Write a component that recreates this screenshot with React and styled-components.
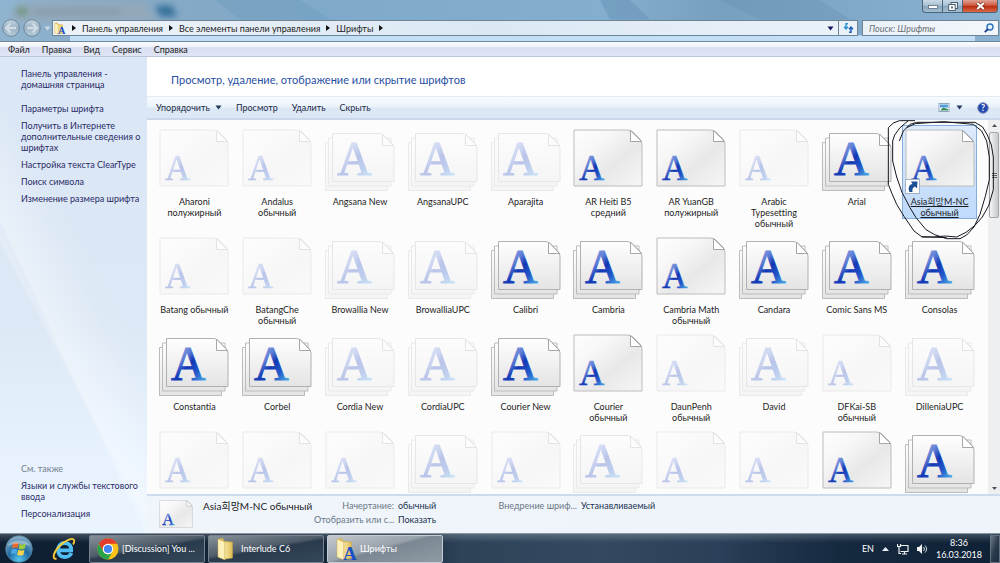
import styled, { createGlobalStyle, css } from "styled-components";

const theme = {
  font: 'Lato, "Open Sans", "Noto Sans CJK KR", sans-serif',
  link: "#2a2a66",
  heading: "#1f4fa3",
  text: "#1c1c1c",
};

const GlobalStyle = createGlobalStyle`
  * {
    box-sizing: border-box;
  }

  body {
    margin: 0;
    font-family: ${theme.font};
    font-size: 9px;
    font-variant-ligatures: none;
    line-height: 11px;
    color: ${theme.text};
  }

  button, input {
    font: inherit;
    font-variant-ligatures: none;
    color: inherit;
    border: 0;
    padding: 0;
    margin: 0;
    background: none;
  }
`;

const Desktop = styled.div`
  display: flex;
  flex-direction: column;
  height: 100vh;
  overflow: hidden;
`;

/* ---------- window frame ---------- */

const Frame = styled.header`
  position: relative;
  flex: none;
  background: linear-gradient(90deg, #8fb4cf 0%, #86a9c4 14%, #7fa9ca 32%, #84aed0 60%, #779fbf 72%, #8ab2d3 100%);
  border-bottom: 1px solid #6f8798;
`;

const Glass = styled.svg`
  position: absolute;
  inset: 0;
  width: 100%;
  height: 100%;
`;

const WindowButtons = styled.div`
  position: relative;
  display: flex;
  justify-content: flex-end;
  height: 19px;
  padding-right: 2px;
`;

const WindowButton = styled.button`
  display: flex;
  align-items: center;
  justify-content: center;
  width: ${({ $wide }) => ($wide ? "36px" : "21px")};
  height: 13px;
  border: 1px solid #4d6477;
  border-top: 0;
  margin-left: -1px;
  border-radius: ${({ $corner }) => ($corner === "left" ? "0 0 0 4px" : $corner === "right" ? "0 0 4px 0" : "0")};
  background: ${({ $wide }) =>
    $wide
      ? "linear-gradient(#e0a294, #cf5a43 45%, #b8290d 50%, #dd6a48)"
      : "linear-gradient(#c8d9e6, #a9c1d3 45%, #85a3ba 50%, #a5c0d4)"};
`;

const AddressRow = styled.div`
  position: relative;
  display: flex;
  align-items: center;
  height: 22px;
  padding: 0 1px 4px 2px;
`;

const NavButton = styled.button`
  flex: none;
  width: 18px;
  height: 18px;
  margin-right: 3px;
`;

const HistoryButton = styled.button`
  flex: none;
  display: flex;
  width: 8px;
`;

const AddressBar = styled.div`
  display: flex;
  align-items: center;
  flex: 1;
  height: 16px;
  border: 1px solid #6e8495;
  background: linear-gradient(90deg, #ecf2f8, #dbe8f4 55%, #eaf2f9);
`;

const Crumb = styled.button`
  margin-left: 6px;
  white-space: nowrap;
`;

const CrumbArrow = styled.svg`
  flex: none;
  width: 4px;
  height: 6px;
  margin-left: 6px;
`;

const DropButton = styled.button`
  display: flex;
  align-items: center;
  justify-content: center;
  width: 16px;
  margin-left: auto;
`;

const RefreshButton = styled.button`
  display: flex;
  align-items: center;
  justify-content: center;
  width: 19px;
  height: 14px;
  border-left: 1px solid #6e8495;
`;

const Search = styled.label`
  display: flex;
  align-items: center;
  width: 137px;
  height: 16px;
  margin-left: 4px;
  padding: 0 4px 0 6px;
  border: 1px solid #6e8495;
  background: linear-gradient(90deg, #e9f1f9, #f3f7fb);

  input {
    flex: 1;
    min-width: 0;
    outline: 0;
  }

  input::placeholder {
    color: #6b7177;
    font-style: italic;
    opacity: 1;
  }
`;

const Menu = styled.nav`
  display: flex;
  flex: none;
  gap: 12px;
  height: 15px;
  padding: 2px 8px;
  background: linear-gradient(#fbfcfe 0%, #eef1f8 35%, #d9dff0 40%, #dfe5f4 100%);
  border-bottom: 1px solid #bcc5da;
`;

/* ---------- body ---------- */

const Body = styled.div`
  display: flex;
  flex: 1;
  min-height: 0;
`;

const Sidebar = styled.aside`
  display: flex;
  flex-direction: column;
  flex: none;
  gap: 6px;
  width: 147px;
  padding: 11px 5px 14px 21px;
  background:
    linear-gradient(62deg, transparent 38%, rgba(255, 255, 255, 0.2) 39%, transparent 60%),
    linear-gradient(245deg, transparent 45%, rgba(255, 255, 255, 0.25) 60%, transparent 61%),
    linear-gradient(#dbe7f6 0%, #dce8f5 55%, #e7f2fe 85%, #eaf4fe 100%);
`;

const SideLink = styled.a`
  color: ${theme.link};
  text-decoration: none;
  margin-bottom: ${({ $home }) => ($home ? "7px" : "0")};
`;

const SeeAlso = styled.span`
  margin-top: auto;
  color: #75808e;
`;

const Content = styled.main`
  display: flex;
  flex-direction: column;
  flex: 1;
  min-width: 0;
`;

const Heading = styled.h1`
  margin: 0;
  padding: 15px 24px 8px;
  font-size: 11px;
  line-height: 16px;
  font-weight: 400;
  color: ${theme.heading};
  background: white;
`;

const Toolbar = styled.div`
  display: flex;
  align-items: center;
  flex: none;
  gap: 14px;
  height: 24px;
  padding: 0 11px 0 9px;
  color: #1e2b45;
  background: linear-gradient(#f7fbff 0%, #e9f2fb 48%, #dbe7f5 52%, #dce8f6 100%);
  border-top: 1px solid #e6ebf2;
  border-bottom: 2px solid #c9d8ea;
`;

const ToolButton = styled.button`
  display: flex;
  align-items: center;
  gap: 5px;
`;

const ToolSide = styled.div`
  display: flex;
  align-items: center;
  gap: 14px;
  margin-left: auto;
`;

const ListArea = styled.div`
  position: relative;
  display: flex;
  flex: 1;
  min-height: 0;
  overflow: hidden;
  background: #fcfcfd;
`;

const FontGrid = styled.div`
  display: grid;
  grid-template-columns: repeat(auto-fill, minmax(74px, 1fr));
  grid-auto-rows: max-content;
  align-content: start;
  gap: 3px 8px;
  flex: 1;
  padding: 5px 11px 0 10px;
`;

const Tile = styled.button`
  position: relative;
  display: flex;
  flex-direction: column;
  align-items: center;
  justify-content: flex-start;
  min-height: 94px;
  padding: 3px 0 0;
  border: 1px solid transparent;

  ${({ $selected }) =>
    $selected &&
    css`
      z-index: 1;
      align-self: start;
      border-color: #86addb;
      background: linear-gradient(#dceafc, #bfdafb);
      text-decoration: underline;
    `}
`;

const TileIcon = styled.svg`
  flex: none;
  width: 70px;
  height: 62px;
  overflow: visible;
  opacity: ${({ $faded }) => ($faded ? 0.28 : 1)};
`;

const TileLabel = styled.span`
  width: 69px;
  margin-top: 5px;
  text-align: center;
`;

const PenMarks = styled.svg`
  position: absolute;
  left: -18px;
  top: -9px;
  width: 115px;
  height: 125px;
  pointer-events: none;
`;

const Scrollbar = styled.div`
  display: flex;
  flex-direction: column;
  align-items: center;
  flex: none;
  width: 12px;
  padding: 4px 0;
  background: #eeeff1;
`;

const Thumb = styled.div`
  display: flex;
  align-items: center;
  justify-content: center;
  width: 10px;
  height: 86px;
  margin: 5px 0 auto;
  border: 1px solid #a3a5a9;
  border-radius: 2px;
  background: linear-gradient(90deg, #f5f5f6, #dcdddf 50%, #c9cbce);
`;

const Details = styled.footer`
  display: flex;
  flex: none;
  align-items: flex-start;
  height: 39px;
  padding: 4px 12px;
  background: linear-gradient(90deg, #f0f5fc, #eff4fb);
  border-top: 2px solid #ccdcee;
`;

const DetailsIcon = styled.svg`
  width: 34px;
  height: 28px;
  margin-right: 10px;
`;

const DetailsTitle = styled.div`
  width: 111px;
  font-size: 10px;
  line-height: 12px;
  white-space: nowrap;
`;

const Props = styled.dl`
  display: grid;
  grid-template-columns: 80px auto;
  gap: 3px 4px;
  margin: 0 25px 0 0;
  min-width: 158px;

  dt {
    text-align: right;
    color: #6a7684;
    white-space: nowrap;
  }

  dd {
    margin: 0;
    color: #22324e;
  }
`;

/* ---------- taskbar ---------- */

const Taskbar = styled.footer`
  display: flex;
  align-items: center;
  flex: none;
  gap: 3px;
  height: 30px;
  color: white;
  background:
    linear-gradient(rgba(255, 255, 255, 0.2), transparent 30%),
    linear-gradient(90deg, #0e1f33 0%, #14263a 40%, #2d4358 46%, #33495f 60%, #2a4058 72%, #15293f 84%, #0f2136 100%);
  border-top: 1px solid #8995a1;
`;

const Launcher = styled.button`
  display: flex;
  justify-content: center;
  width: ${({ $width }) => $width}px;
`;

const TaskButton = styled.button`
  display: flex;
  align-items: center;
  gap: 2px;
  width: 116px;
  height: 28px;
  padding-left: 6px;
  border: 1px solid ${({ $active }) => ($active ? "#c3ccd3" : "#76838f")};
  border-radius: 2px;
  background: ${({ $active }) =>
    $active
      ? "linear-gradient(165deg, #c3c8cd 0%, #98a2ab 45%, #7b8893 50%, #8e9aa4 100%)"
      : "linear-gradient(170deg, #87919a 0%, #4d5b69 45%, #2a3b4d 52%, #34475a 100%)"};
  white-space: nowrap;

  svg {
    width: 24px;
    height: 24px;
    overflow: visible;
  }
`;

const Tray = styled.div`
  display: flex;
  align-items: center;
  gap: 8px;
  height: 100%;
  margin-left: auto;
`;

const Clock = styled.time`
  width: 46px;
  line-height: 12px;
  text-align: center;
`;

const ShowDesktop = styled.button`
  width: 10px;
  height: 28px;
  border: 1px solid #64727f;
  background: linear-gradient(110deg, #6a7783, #2b3c4e 50%, #1b2c40);
`;

/* ---------- data ---------- */

const sideLinks = [
  "Параметры шрифта",
  "Получить в Интернете дополнительные сведения о шрифтах",
  "Настройка текста ClearType",
  "Поиск символа",
  "Изменение размера шрифта",
];

const fonts = [
  { name: "Aharoni полужирный", faded: true },
  { name: "Andalus обычный", faded: true },
  { name: "Angsana New", stack: true, faded: true },
  { name: "AngsanaUPC", stack: true, faded: true },
  { name: "Aparajita", stack: true, faded: true },
  { name: "AR Heiti B5 средний" },
  { name: "AR YuanGB полужирный" },
  { name: "Arabic Typesetting обычный", faded: true },
  { name: "Arial", stack: true },
  { name: "Asia희망M-NC обычный", selected: true },
  { name: "Batang обычный", faded: true },
  { name: "BatangChe обычный", faded: true },
  { name: "Browallia New", stack: true, faded: true },
  { name: "BrowalliaUPC", stack: true, faded: true },
  { name: "Calibri", stack: true },
  { name: "Cambria", stack: true },
  { name: "Cambria Math обычный" },
  { name: "Candara", stack: true },
  { name: "Comic Sans MS", stack: true },
  { name: "Consolas", stack: true },
  { name: "Constantia", stack: true },
  { name: "Corbel", stack: true },
  { name: "Cordia New", stack: true, faded: true },
  { name: "CordiaUPC", stack: true, faded: true },
  { name: "Courier New", stack: true },
  { name: "Courier обычный" },
  { name: "DaunPenh обычный", faded: true },
  { name: "David", stack: true, faded: true },
  { name: "DFKai-SB обычный", faded: true },
  { name: "DilleniaUPC", stack: true, faded: true },
  { faded: true },
  { faded: true },
  { faded: true },
  { stack: true, faded: true },
  { faded: true },
  { stack: true, faded: true },
  { faded: true },
  { faded: true },
  {},
  { stack: true },
];

/* ---------- drawings ---------- */

const Gradients = () => (
  <svg width="0" height="0" style={{ position: "absolute" }} aria-hidden="true">
    <defs>
      <linearGradient id="paper" x1="0" y1="0" x2="1" y2="1">
        <stop offset="0" stopColor="#fefefe" />
        <stop offset="0.3" stopColor="#f7f7f7" />
        <stop offset="0.6" stopColor="#e8e8e9" />
        <stop offset="1" stopColor="#f6f6f6" />
      </linearGradient>
      <linearGradient id="sheet" x1="0" y1="0" x2="0" y2="1">
        <stop offset="0" stopColor="#fefefe" />
        <stop offset="1" stopColor="#e4e4e5" />
      </linearGradient>
      <linearGradient id="letter" x1="0.2" y1="0" x2="0.9" y2="1">
        <stop offset="0" stopColor="#b4c2ed" />
        <stop offset="0.35" stopColor="#5b7bd4" />
        <stop offset="0.5" stopColor="#1237b4" />
        <stop offset="0.7" stopColor="#2157c8" />
        <stop offset="0.9" stopColor="#4ba6e4" />
      </linearGradient>
      <linearGradient id="folder" x1="0" y1="0" x2="1" y2="0">
        <stop offset="0" stopColor="#f7e7a1" />
        <stop offset="1" stopColor="#dcb94f" />
      </linearGradient>
      <radialGradient id="orb" cx="0.5" cy="0.9" r="0.9">
        <stop offset="0" stopColor="#56c7ef" />
        <stop offset="0.45" stopColor="#1f6ba3" />
        <stop offset="1" stopColor="#8fb2c9" />
      </radialGradient>
      <linearGradient id="nav" x1="0" y1="0" x2="0" y2="1">
        <stop offset="0" stopColor="#c6d6e2" />
        <stop offset="0.5" stopColor="#98b0c2" />
        <stop offset="1" stopColor="#b7cede" />
      </linearGradient>
      <filter id="soft" x="-20%" y="-50%" width="140%" height="200%">
        <feGaussianBlur stdDeviation="3" />
      </filter>
    </defs>
  </svg>
);

const Letter = ({ x, y, size, weight = 0.6 }) => (
  <text
    x={x}
    y={y}
    fontSize={size}
    fontFamily='"Liberation Serif", serif'
    fill="url(#letter)"
    stroke="url(#letter)"
    strokeWidth={weight}
  >
    A
  </text>
);

const Sheet = () => (
  <>
    <path d="M1 1H54Q58 1 60 3L67 10Q69 12 69 16V57H1Z" fill="url(#paper)" stroke="#bcbcbe" />
    <path d="M57.500 1.500V12.500H68.500Z" fill="#fff" stroke="#a6a6a8" />
    <Letter x="6" y="51" size="35" />
  </>
);

const Stack = () => (
  <>
    <path d="M.5 13.500H62.500V61.500H.5Z" fill="url(#sheet)" stroke="#bcbcbe" />
    <path d="M3.500 9H66V57H3.500Z" fill="url(#sheet)" stroke="#bcbcbe" />
    <path d="M7.500 4.500H54Q57 4.500 59 6.500L66 13.500Q69 16 69 19V52.500H7.500Z" fill="url(#sheet)" stroke="#b0b0b2" />
    <path d="M57.500 5V16.500H68.500Z" fill="#fff" stroke="#a6a6a8" />
    <Letter x="12" y="46" size="48" weight="1" />
  </>
);

const ShortcutBadge = () => (
  <>
    <rect x="0.500" y="50.500" width="14" height="14" fill="#fff" stroke="#9fb2c9" />
    <path d="M4.500 63C2.500 58.500 4.500 55.500 7.500 55L6 52.500L12.500 52.500L12 59.500L10 57.500C7.500 58.500 7 60.500 7.500 63Z" fill="#1c4f96" />
  </>
);

const FontTile = ({ name, stack, faded, selected }) => (
  <Tile $selected={selected}>
    <TileIcon $faded={faded} viewBox="0 0 70 62" aria-hidden="true">
      {stack ? <Stack /> : <Sheet />}
      {selected && <ShortcutBadge />}
    </TileIcon>
    {name && <TileLabel>{name}</TileLabel>}
    {selected && (
      <PenMarks viewBox="255 20 345 375" fill="none" stroke="#15181d" strokeWidth="3" strokeLinejoin="round">
        <path d="M345 31H298L280 38L265 52V222L276 250L290 282L312 318L342 362L365 379L440 382" />
        <path d="M298 92L310 62L330 42L350 36H525L548 50L562 74L574 104L580 140V238L566 286L547 320L524 346L498 366L470 380L436 377L400 380H365" />
        <path d="M325 31L300 52L284 74L278 92V152L290 200L306 246L330 292L348 322L378 358L404 373L440 385H480L500 374L522 350L540 312L556 258L568 208V140L560 92L545 62L520 42L430 34L346 40L320 52" />
      </PenMarks>
    )}
  </Tile>
);

const FolderFont = ({ letter = true, ...rest }) => (
  <svg viewBox="0 0 24 24" aria-hidden="true" {...rest}>
    <path d="M3 2L8 1L9 4L17 5V20L8 22L3 20Z" fill="#d9b653" />
    <path d="M3 2L10 5V23L3 20Z" fill="#fdf1b9" stroke="#c9a849" strokeWidth="0.5" />
    <path d="M10 5H17.500V21L10 22Z" fill="url(#folder)" stroke="#c9a849" strokeWidth="0.5" />
    {letter && (
      <text x="9" y="23" fontSize="19" fontFamily='"Liberation Serif", serif' fontWeight="700" fill="#174fc9">
        A
      </text>
    )}
  </svg>
);

const Caret = ({ color = "#24395c" }) => (
  <svg width="7" height="5" viewBox="0 0 7 5" aria-hidden="true">
    <path d="M.5 .5H6.500L3.500 4.500Z" fill={color} />
  </svg>
);

const NavArrow = ({ flip }) => (
  <svg width="18" height="18" viewBox="0 0 18 18" aria-hidden="true">
    <circle cx="9" cy="9" r="8.300" fill="url(#nav)" stroke="#708799" />
    <path
      d="M8.500 4.500L4 9L8.500 13.500M4.500 9H14"
      transform={flip ? "rotate(180 9 9)" : undefined}
      fill="none"
      stroke="#cfdce6"
      strokeWidth="2.400"
    />
  </svg>
);

const Arrow = () => (
  <CrumbArrow viewBox="0 0 4 6" aria-hidden="true">
    <path d="M0 0L4 3L0 6Z" fill="#111" />
  </CrumbArrow>
);

const StartOrb = () => (
  <svg width="28" height="28" viewBox="0 0 28 28" aria-hidden="true">
    <circle cx="14" cy="14" r="13.300" fill="url(#orb)" stroke="#5d8199" strokeWidth="0.800" />
    <path d="M8 8.500C10 7 12 7.300 13.600 8.300L12.500 13.300C10.800 12.300 8.800 12.300 6.900 13.500Z" fill="#ee6a2c" />
    <path d="M14.600 8.800C16.500 9.900 18.700 9.800 21 8.500L19.800 13.600C17.700 14.800 15.500 14.700 13.500 13.700Z" fill="#9bc93f" />
    <path d="M6.600 14.600C8.700 13.400 10.600 13.400 12.300 14.400L11.200 19.300C9.400 18.300 7.400 18.300 5.500 19.500Z" fill="#4ba6e4" />
    <path d="M13.300 14.800C15.200 15.900 17.400 15.800 19.500 14.700L18.400 19.700C16.300 20.900 14.200 20.900 12.200 19.800Z" fill="#fbd34a" />
    <path d="M3 11C5 4 23 4 25 11C20 8 8 8 3 11Z" fill="#fff" opacity="0.350" />
  </svg>
);

const Explorer = () => (
  <svg width="24" height="24" viewBox="0 0 24 24" aria-hidden="true">
    <path d="M19.500 16C18 19 15.500 20 12.500 20C8.300 20 6 17 6 12.800C6 8.500 9 6 12.700 6C17 6 19.500 9 19.200 13.300H7.500" fill="none" stroke="#4fbdf1" strokeWidth="3.800" />
    <path d="M4.500 21.500C0 23 1 16 7 9.500C13 3 21 .5 22 3C22.500 4.300 22 6 21 7.500" fill="none" stroke="#f4cb36" strokeWidth="1.900" />
  </svg>
);

const Chrome = () => (
  <svg viewBox="0 0 24 24" aria-hidden="true">
    <circle cx="12" cy="12" r="10.500" fill="#fbc116" />
    <path d="M2.900 6.750A10.500 10.500 0 0 1 21.100 6.750H12A5.250 5.250 0 0 0 7.450 14.630Z" fill="#e33b2e" />
    <path d="M2.900 6.750A10.500 10.500 0 0 0 12 22.500L16.550 14.630A5.250 5.250 0 0 1 7.450 14.630Z" fill="#2ba24c" />
    <circle cx="12" cy="12" r="5.250" fill="#fff" />
    <circle cx="12" cy="12" r="4.100" fill="#4285f4" />
  </svg>
);

const App = () => (
  <Desktop>
    <GlobalStyle />
    <Gradients />
    <Frame>
      <Glass viewBox="0 0 1000 42" preserveAspectRatio="none" aria-hidden="true">
        <g filter="url(#soft)">
          <path d="M10 22L18 3H145L155 22Z" fill="#93a9bb" />
          <path d="M155 6H172L177 17H160Z" fill="#356f99" />
          <rect x="17" y="8" width="10" height="7" fill="#6b9470" />
          <rect x="36" y="10" width="84" height="4" fill="#8196a8" />
        </g>
        <path d="M215 0H300L330 20H240Z" fill="#6b98bb" opacity="0.350" />
        <path d="M600 0H630L650 20H610Z" fill="#5f8cae" opacity="0.400" />
        <path d="M720 0H820L850 20H760Z" fill="#5f8cae" opacity="0.300" />
        <path d="M70 36H975V42H70Z" fill="#c3dff7" />
      </Glass>
      <WindowButtons>
        <WindowButton $corner="left" aria-label="Свернуть">
          <svg width="10" height="5" viewBox="0 0 10 5">
            <rect x="0.500" y="1.500" width="9" height="3" fill="#fff" stroke="#5c6f7f" strokeWidth="0.800" />
          </svg>
        </WindowButton>
        <WindowButton aria-label="Восстановить">
          <svg width="10" height="9" viewBox="0 0 10 9">
            <rect x="3" y="0.500" width="6.500" height="6" fill="#e9eff4" stroke="#4d6070" />
            <rect x="0.700" y="2.500" width="6.500" height="6" fill="#fff" stroke="#4d6070" />
            <rect x="3" y="4.500" width="2" height="2" fill="#5a7082" />
          </svg>
        </WindowButton>
        <WindowButton $wide $corner="right" aria-label="Закрыть">
          <svg width="9" height="8" viewBox="0 0 9 8">
            <path d="M1 .8L8 7.200M8 .8L1 7.200" stroke="#7d3426" strokeWidth="3.400" />
            <path d="M1.200 1L7.800 7M7.800 1L1.200 7" stroke="#fff" strokeWidth="2" />
          </svg>
        </WindowButton>
      </WindowButtons>
      <AddressRow>
        <NavButton aria-label="Назад">
          <NavArrow />
        </NavButton>
        <NavButton aria-label="Вперед">
          <NavArrow flip />
        </NavButton>
        <HistoryButton aria-label="Журнал">
          <Caret color="#c9dae8" />
        </HistoryButton>
        <AddressBar>
          <FolderFont width="13" height="13" />
          <Arrow />
          <Crumb>Панель управления</Crumb>
          <Arrow />
          <Crumb>Все элементы панели управления</Crumb>
          <Arrow />
          <Crumb>Шрифты</Crumb>
          <Arrow />
          <DropButton aria-label="Предыдущие адреса">
            <Caret color="#15155e" />
          </DropButton>
          <RefreshButton aria-label="Обновить">
            <svg width="11" height="10" viewBox="0 0 11 10">
              <path d="M5 .8H3V5M1 3.800L3 6L5 3.800" fill="none" stroke="#2f95d8" strokeWidth="1.500" />
              <path d="M6 9.200H8V5M6 6.200L8 4L10 6.200" fill="none" stroke="#2061b5" strokeWidth="1.500" />
            </svg>
          </RefreshButton>
        </AddressBar>
        <Search>
          <input type="search" placeholder="Поиск: Шрифты" aria-label="Поиск: Шрифты" />
          <svg width="10" height="10" viewBox="0 0 10 10" aria-hidden="true">
            <circle cx="6" cy="4" r="3" fill="#e6f3fc" stroke="#2b74bd" strokeWidth="1.400" />
            <path d="M4 6L.8 9.200" stroke="#1d3f8c" strokeWidth="1.800" />
          </svg>
        </Search>
      </AddressRow>
    </Frame>
    <Menu>
      {["Файл", "Правка", "Вид", "Сервис", "Справка"].map((item) => (
        <button key={item}>{item}</button>
      ))}
    </Menu>
    <Body>
      <Sidebar>
        <SideLink href="#" $home>
          Панель управления - домашняя страница
        </SideLink>
        {sideLinks.map((link) => (
          <SideLink key={link} href="#">
            {link}
          </SideLink>
        ))}
        <SeeAlso>См. также</SeeAlso>
        <SideLink href="#">Языки и службы текстового ввода</SideLink>
        <SideLink href="#">Персонализация</SideLink>
      </Sidebar>
      <Content>
        <Heading>Просмотр, удаление, отображение или скрытие шрифтов</Heading>
        <Toolbar>
          <ToolButton>
            Упорядочить <Caret />
          </ToolButton>
          <ToolButton>Просмотр</ToolButton>
          <ToolButton>Удалить</ToolButton>
          <ToolButton>Скрыть</ToolButton>
          <ToolSide>
            <ToolButton aria-label="Вид значков">
              <svg width="13" height="10" viewBox="0 0 13 10">
                <rect x="1" y="0.500" width="10" height="8" fill="#fff" stroke="#8fa6bd" />
                <rect x="2" y="1.500" width="8" height="3" fill="#4d9edb" />
                <path d="M2 7.500L5 4.500L10 6V7.500Z" fill="#3a8b63" />
              </svg>
              <Caret />
            </ToolButton>
            <ToolButton aria-label="Справка">
              <svg width="12" height="12" viewBox="0 0 12 12">
                <circle cx="6" cy="6" r="5.300" fill="#2448ad" stroke="#8596b5" />
                <text x="6" y="9.200" fontSize="9" textAnchor="middle" fill="#fff" fontWeight="700">
                  ?
                </text>
              </svg>
            </ToolButton>
          </ToolSide>
        </Toolbar>
        <ListArea>
          <FontGrid>
            {fonts.map((font, i) => (
              <FontTile key={i} {...font} />
            ))}
          </FontGrid>
          <Scrollbar>
            <svg width="5" height="3" viewBox="0 0 5 3">
              <path d="M0 3L2.500 0L5 3Z" fill="#4c5159" />
            </svg>
            <Thumb>
              <svg width="5" height="5" viewBox="0 0 5 5">
                <path d="M0 .5H5M0 2.500H5M0 4.500H5" stroke="#5f646b" />
              </svg>
            </Thumb>
            <svg width="5" height="3" viewBox="0 0 5 3">
              <path d="M0 0L2.500 3L5 0Z" fill="#4c5159" />
            </svg>
          </Scrollbar>
        </ListArea>
        <Details>
          <DetailsIcon viewBox="0 0 70 58" aria-hidden="true">
            <Sheet />
          </DetailsIcon>
          <DetailsTitle>Asia희망M-NC обычный</DetailsTitle>
          <Props>
            <dt>Начертание:</dt>
            <dd>обычный</dd>
            <dt>Отобразить или с...</dt>
            <dd>Показать</dd>
          </Props>
          <Props>
            <dt>Внедрение шриф...</dt>
            <dd>Устанавливаемый</dd>
          </Props>
        </Details>
      </Content>
    </Body>
    <Taskbar>
      <Launcher $width={38} aria-label="Пуск">
        <StartOrb />
      </Launcher>
      <Launcher $width={45} aria-label="Internet Explorer">
        <Explorer />
      </Launcher>
      <TaskButton>
        <Chrome />
        [Discussion] You ...
      </TaskButton>
      <TaskButton>
        <FolderFont letter={false} />
        Interlude C6
      </TaskButton>
      <TaskButton $active>
        <FolderFont />
        Шрифты
      </TaskButton>
      <Tray>
        <span>EN</span>
        <svg width="7" height="4" viewBox="0 0 7 4" aria-hidden="true">
          <path d="M0 4L3.500 0L7 4Z" fill="#e8edf2" />
        </svg>
        <svg width="12" height="12" viewBox="0 0 12 12" aria-hidden="true">
          <path d="M3.500 2.500H11V8.500H3.500M5 11H10M7.500 8.500V11" fill="none" stroke="#eef2f5" strokeWidth="1.200" />
          <path d="M.5 1V3.500H3.500V1M2 3.500V10.500H4" fill="none" stroke="#eef2f5" strokeWidth="1.200" />
        </svg>
        <svg width="11" height="12" viewBox="0 0 11 12" aria-hidden="true">
          <path d="M0 4H2L5 1V11L2 8H0Z" fill="#f4f6f8" />
          <path d="M6.500 4C7.500 5 7.500 7 6.500 8M8 2.500C10 4.500 10 7.500 8 9.500" fill="none" stroke="#dfe5ea" />
        </svg>
        <Clock>
          8:36
          <br />
          16.03.2018
        </Clock>
        <ShowDesktop aria-label="Свернуть все окна" />
      </Tray>
    </Taskbar>
  </Desktop>
);

export default App;
